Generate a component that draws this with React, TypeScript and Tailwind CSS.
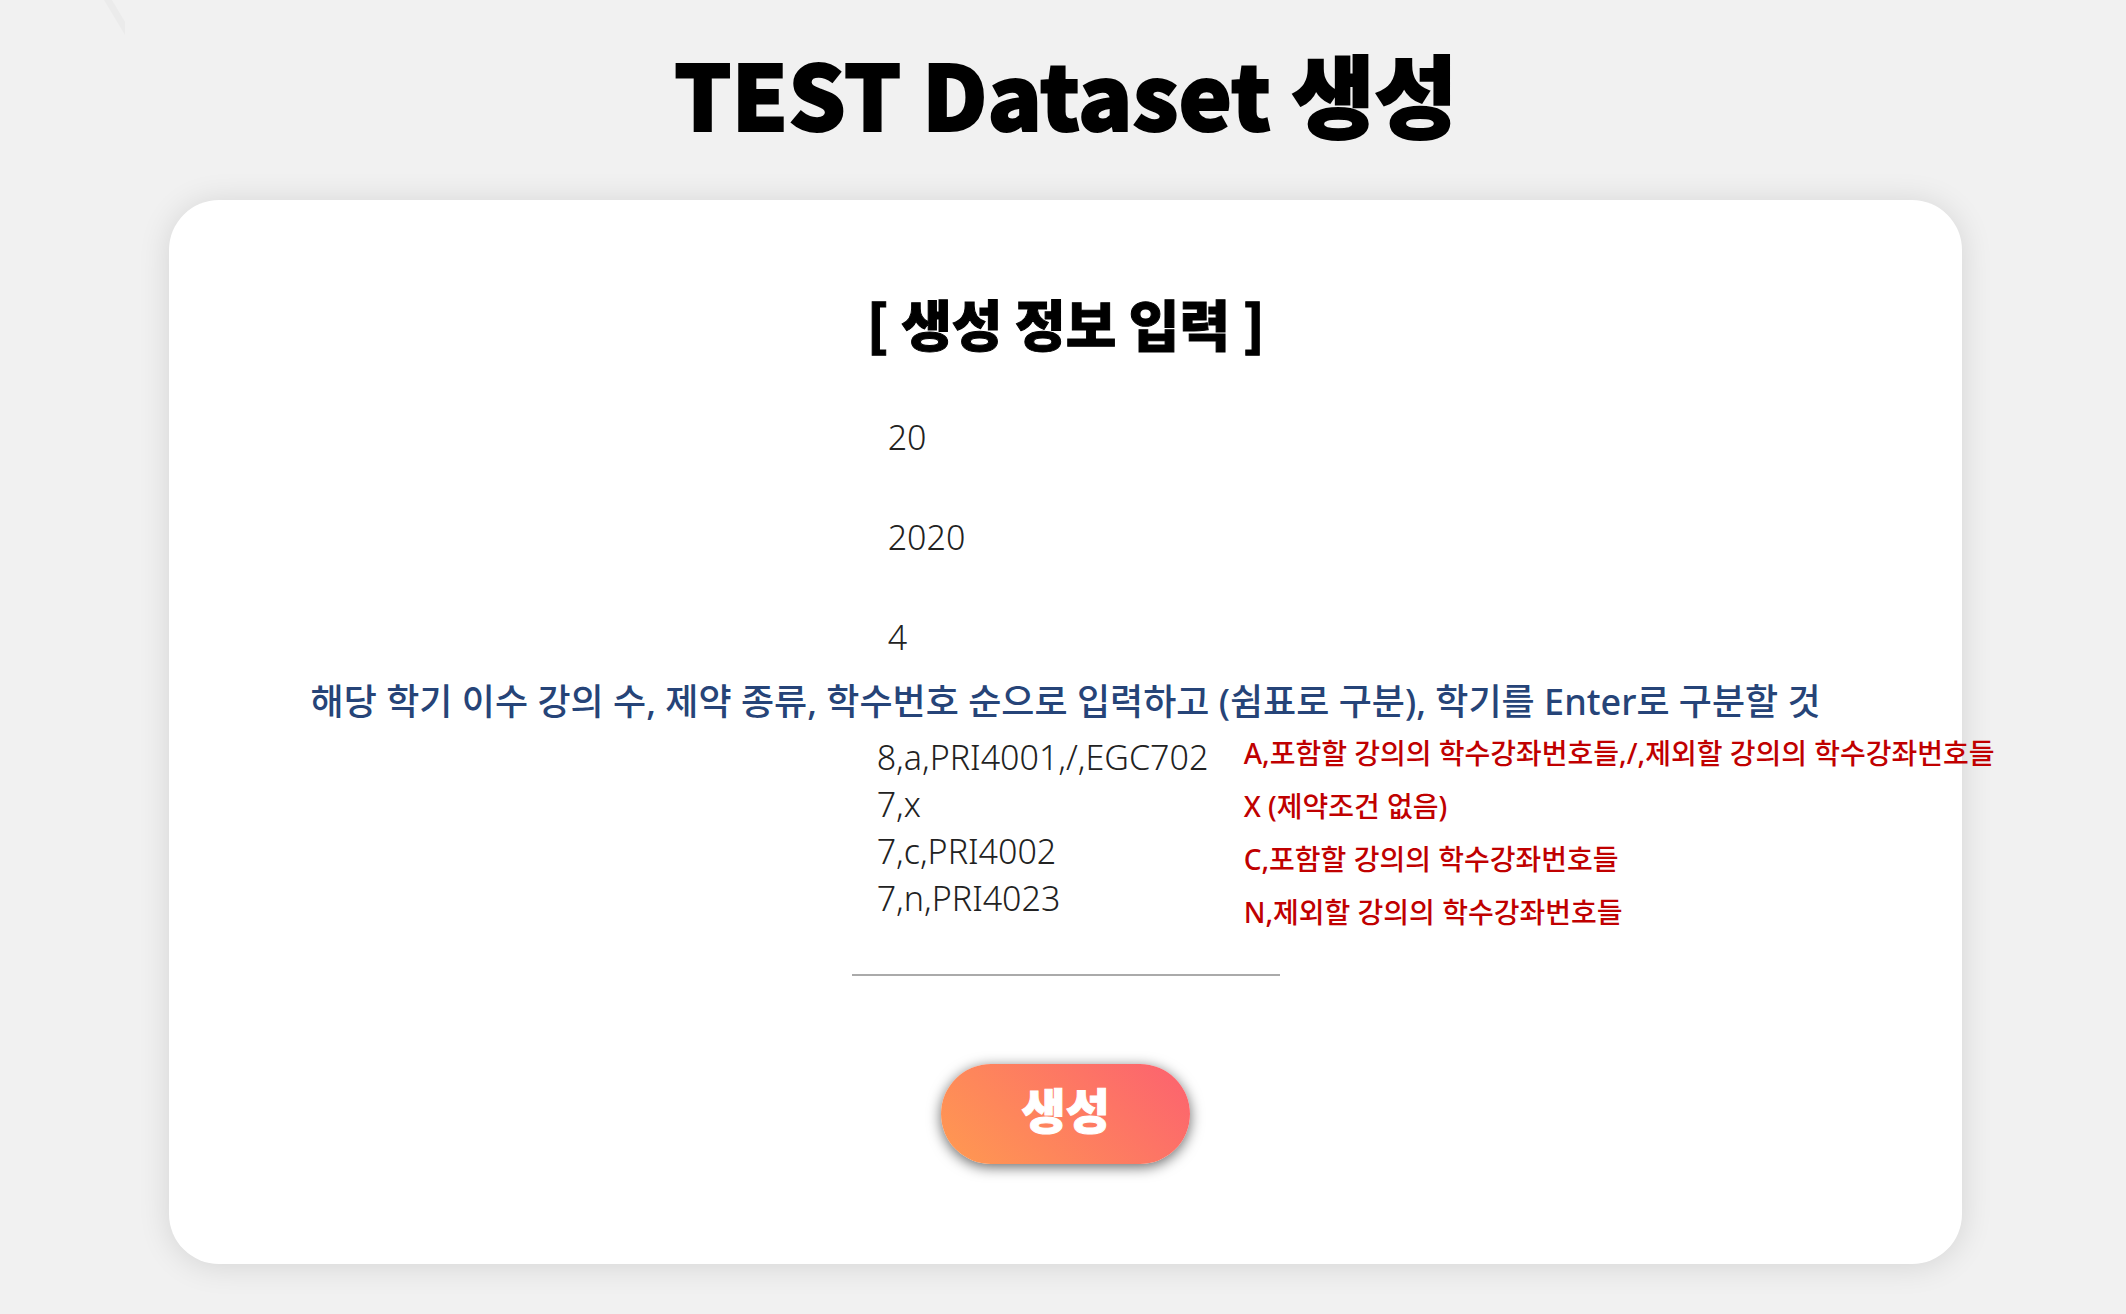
const notes = [
  { text: 'A,포함할 강의의 학수강좌번호들,/,제외할 강의의 학수강좌번호들' },
  { text: 'X (제약조건 없음)' },
  { text: 'C,포함할 강의의 학수강좌번호들' },
  { text: 'N,제외할 강의의 학수강좌번호들' },
];

const fields = [
  { label: '데이터 수', value: '20' },
  { label: '입학 연도', value: '2020' },
  { label: '이수 학기 수', value: '4' },
];

const constraints = '8,a,PRI4001,/,EGC702\n7,x\n7,c,PRI4002\n7,n,PRI4023';

export default function App() {
  return (
    <div className="relative min-h-screen overflow-hidden bg-[#f1f1f1] pr-[7.7%] pb-12 pl-[7.95%] font-['Noto_Sans','Noto_Sans_CJK_KR',sans-serif] text-black">
      <svg className="absolute left-[104px] top-0" width="21" height="35" viewBox="0 0 21 35" aria-hidden="true">
        <path d="M0 0H8L21 22V35Z" fill="#ebebeb" />
      </svg>

      <h1 className="pt-[40px] text-center font-['Noto_Sans_CJK_KR',sans-serif] text-[90px] leading-[104px] font-black [-webkit-text-stroke:2px_black]">
        TEST Dataset 생성
      </h1>

      <main className="mt-[56px] rounded-[50px] bg-white pt-[90px] pb-[100px] shadow-[0_2px_32px_rgba(0,0,0,0.12)]">
        <h2 className="text-center font-['Noto_Sans_CJK_KR',sans-serif] text-[55px] leading-[64px] font-black [-webkit-text-stroke:1px_black]">
          [ 생성 정보 입력 ]
        </h2>

        <form onSubmit={(e) => e.preventDefault()} className="mt-[33px]">
          <div className="mx-auto flex w-[428px] flex-col">
            {fields.map((f) => (
              <input
                key={f.label}
                aria-label={f.label}
                defaultValue={f.value}
                className="h-[100px] w-full bg-transparent px-9 text-[34px] font-light text-[#222] outline-none"
              />
            ))}
          </div>

          <p className="-mt-2 text-center text-[36px] leading-[46px] font-medium whitespace-nowrap text-[#264478]">
            해당 학기 이수 강의 수, 제약 종류, 학수번호 순으로 입력하고 (쉼표로 구분), 학기를 Enter로 구분할 것
          </p>

          <div className="grid grid-cols-[1fr_428px_1fr]">
            <textarea
              aria-label="제약 조건"
              defaultValue={constraints}
              wrap="off"
              className="col-start-2 h-[251px] w-full resize-none overflow-hidden border-b-2 border-[#aaa] bg-transparent px-[25px] pt-[9px] text-[34px] leading-[47px] font-light text-[#222] outline-none"
            />
            <ul className="relative -ml-9 flex w-0 flex-col gap-[13px] pt-[8px] text-[28px] leading-[40px] font-medium whitespace-nowrap text-[#c00000]">
              {notes.map((n) => (
                <li key={n.text}>{n.text}</li>
              ))}
            </ul>
          </div>

          <button
            type="submit"
            className="mx-auto mt-[88px] flex h-[100px] w-[249px] items-center justify-center rounded-full bg-linear-[45deg,#ff9a50,#fc6170] pb-3 font-['Noto_Sans_CJK_KR',sans-serif] text-[48px] leading-none font-black text-white shadow-[0_3px_14px_rgba(0,0,0,0.6)] [-webkit-text-stroke:1px_white]"
          >
            생성
          </button>
        </form>
      </main>
    </div>
  );
}
